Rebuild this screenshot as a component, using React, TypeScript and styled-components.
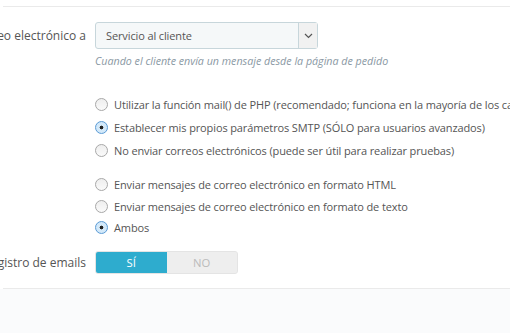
import { FC } from 'react'
import styled, { createGlobalStyle } from 'styled-components'

const GlobalStyle = createGlobalStyle`
  html, body {
    margin: 0;
    padding: 0;
    overflow: hidden;
    background: #fafbfc;
  }
  body {
    font-family: "Open Sans", "DejaVu Sans", sans-serif;
    color: #555;
  }
`

interface RadioItem {
  label: string
  checked?: boolean
}

const methodOptions: RadioItem[] = [
  { label: 'Utilizar la función mail() de PHP (recomendado; funciona en la mayoría de los casos)' },
  { label: 'Establecer mis propios parámetros SMTP (SÓLO para usuarios avanzados)', checked: true },
  { label: 'No enviar correos electrónicos (puede ser útil para realizar pruebas)' },
]

const formatOptions: RadioItem[] = [
  { label: 'Enviar mensajes de correo electrónico en formato HTML' },
  { label: 'Enviar mensajes de correo electrónico en formato de texto' },
  { label: 'Ambos', checked: true },
]

const RadioList: FC<{ items: RadioItem[]; rowHeight: number }> = ({ items, rowHeight }) => (
  <Radios>
    {items.map((item) => (
      <RadioRow key={item.label} $height={rowHeight}>
        <RadioDot $checked={!!item.checked} />
        <span>{item.label}</span>
      </RadioRow>
    ))}
  </Radios>
)

export default function App() {
  return (
    <>
      <GlobalStyle />
      <Panel>
        <Heading />
        <Body>
          <Row>
            <Label $top={5}>
              <span>Enviar correo electrónico a</span>
            </Label>
            <Field>
              <Select>
                <span>Servicio al cliente</span>
                <Caret>
                  <svg width="9" height="6" viewBox="0 0 9 6">
                    <path d="M1 1l3.5 3.5L8 1" fill="none" stroke="#555" strokeWidth="1.2" />
                  </svg>
                </Caret>
              </Select>
              <Help>Cuando el cliente envía un mensaje desde la página de pedido</Help>
            </Field>
          </Row>

          <Row $gap={24}>
            <Label $top={0} />
            <Field>
              <RadioList items={methodOptions} rowHeight={23} />
            </Field>
          </Row>

          <Row $gap={12}>
            <Label $top={0} />
            <Field>
              <RadioList items={formatOptions} rowHeight={21.5} />
            </Field>
          </Row>

          <Row $gap={12}>
            <Label $top={3}>
              <span>Registro de emails</span>
            </Label>
            <Field>
              <Toggle>
                <ToggleOption $active>SÍ</ToggleOption>
                <ToggleOption>NO</ToggleOption>
              </Toggle>
            </Field>
          </Row>
        </Body>
        <Footer />
      </Panel>
    </>
  )
}

const Panel = styled.div`
  background: #fff;
  width: 900px;
`

const Heading = styled.div`
  height: 6px;
  margin-left: 3px;
  border-bottom: 1px solid #eaeaea;
`

const Body = styled.div`
  padding: 15px 0 14px;
  border-bottom: 1px solid #eaeaea;
  margin-left: 3px;
`

const Row = styled.div<{ $gap?: number }>`
  display: grid;
  grid-template-columns: 83px 1fr;
  column-gap: 9px;
  margin-top: ${(p) => p.$gap ?? 0}px;
`

const Label = styled.div<{ $top: number }>`
  display: flex;
  justify-content: flex-end;
  white-space: nowrap;
  font-size: 12px;
  line-height: 17px;
  padding-top: ${(p) => p.$top}px;
  color: #555;
`

const Field = styled.div`
  display: flex;
  flex-direction: column;
`

const Select = styled.div`
  width: 221px;
  height: 25px;
  display: flex;
  align-items: center;
  justify-content: space-between;
  background: #f5f8f9;
  border: 1px solid #c7d6db;
  border-radius: 3px;
  font-size: 11px;
  letter-spacing: -0.12px;
  color: #555;

  span {
    padding-left: 10px;
  }
`

const Caret = styled.div`
  width: 18px;
  height: 100%;
  display: flex;
  align-items: center;
  justify-content: center;
  border-left: 1px solid #c7d6db;
  background: #f1f1f1;
`

const Help = styled.div`
  margin-top: 5px;
  font-size: 10.7px;
  font-style: italic;
  line-height: 15px;
  color: #8a98a3;
`

const Radios = styled.div`
  display: flex;
  flex-direction: column;
`

const RadioRow = styled.div<{ $height: number }>`
  display: flex;
  align-items: center;
  gap: 6px;
  height: ${(p) => p.$height}px;
  font-size: 11px;
  letter-spacing: -0.12px;
  white-space: nowrap;
  color: #555;
`

const RadioDot = styled.span<{ $checked: boolean }>`
  width: 11px;
  height: 11px;
  border-radius: 50%;
  flex: none;
  border: 1px solid ${(p) => (p.$checked ? '#5b9bd5' : '#a8a8a8')};
  background: ${(p) =>
    p.$checked
      ? 'radial-gradient(circle, #222 0 1.6px, #d6ebfa 2.2px, #cce4f7 100%)'
      : 'linear-gradient(#eee, #fafafa)'};
`

const Toggle = styled.div`
  display: flex;
  width: 143px;
  height: 23px;
  border-radius: 3px;
  overflow: hidden;
  background: #eee;
  border: 1px solid #e4e4e4;
  box-sizing: border-box;
`

const ToggleOption = styled.div<{ $active?: boolean }>`
  flex: 1;
  display: flex;
  align-items: center;
  justify-content: center;
  font-size: 11.3px;
  color: ${(p) => (p.$active ? '#fff' : '#bbb')};
  background: ${(p) => (p.$active ? '#2eacce' : '#eee')};
`

const Footer = styled.div`
  height: 60px;
  background: #fafbfc;
`
